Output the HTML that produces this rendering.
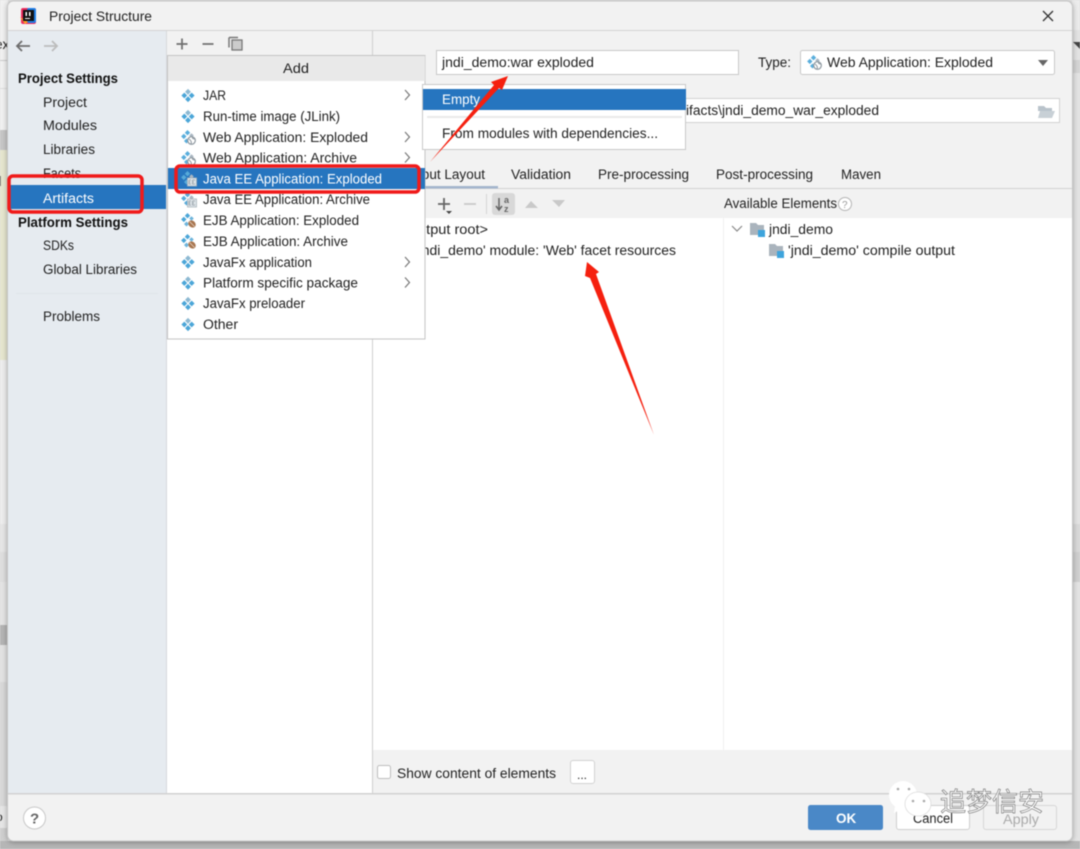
<!DOCTYPE html>
<html lang="en"><head><meta charset="utf-8"><title>Project Structure</title>
<style>
html,body{margin:0;padding:0;background:#ddd}
body{width:1080px;height:849px;overflow:hidden}
svg{display:block;filter:blur(.4px)}
text{font-family:"Liberation Sans","Noto Sans CJK SC",sans-serif;font-size:13.5px;fill:#222}
.b{font-weight:bold;fill:#111}
.w{fill:#fff}
</style></head><body>
<svg width="1080" height="849" viewBox="0 0 1080 849" xmlns="http://www.w3.org/2000/svg">
<defs>
<filter id="sh" x="-5%" y="-5%" width="110%" height="110%"><feDropShadow dx="0" dy="1" stdDeviation="3" flood-color="#000" flood-opacity=".35"/></filter>
<g id="d"><path d="M3.300 7l2.900-2.900L9.100 7 6.200 9.900z" fill="none"/><path d="M3.300 4.100L6.200 7 3.300 9.900.4 7zM10.700 4.100L13.600 7l-2.900 2.900L7.800 7zM7 7.800l2.900 2.900L7 13.600l-2.900-2.900z" fill="#4ba6d8"/><path d="M7 .4l2.900 2.900L7 6.200 4.100 3.300z" fill="#8db9d2"/></g>
<g id="web"><path d="M6.500 0l2.700 2.700-2.700 2.700-2.700-2.700zM2.800 3.700l2.700 2.700-2.700 2.700L.1 6.400z" fill="#5aaedc"/><path d="M10.500 3.200l2.300 2.300-2.300 2.300-2.300-2.300z" fill="#a9b7c2"/><path d="M5.500 8.500L8 11l-2.500 2.500L3 11z" fill="#5aaedc"/><circle cx="10.500" cy="10.500" r="3.800" fill="#fff" stroke="#8d979f" stroke-width="1.200"/><path d="M8 9c2 1.500 3 3 2 5M11.500 7c-.5 1.500 1 2 2.500 2" fill="none" stroke="#8d979f"/></g>
<g id="ee"><path d="M6.500 0l2.700 2.700-2.700 2.700-2.700-2.700zM2.800 3.700l2.700 2.700-2.700 2.700L.1 6.400zM5.500 8.500L8 11l-2.500 2.500L3 11z" fill="#57aad9"/><path d="M10.500 3.200l2.300 2.300-2.300 2.300-2.300-2.300z" fill="#a9b7c2"/><rect x="6.500" y="7" width="9" height="8" fill="#dfe6ea" stroke="#a9b4bb" stroke-width=".8"/><path d="M8 9v4h2M8 11h1.500M8 9h2M11.500 9v4H14M11.500 11H13M11.500 9H14" fill="none" stroke="#8d979f" stroke-width=".7"/></g>
<g id="ejb"><path d="M6.500 0l2.700 2.700-2.700 2.700-2.700-2.700zM2.800 3.700l2.700 2.700-2.700 2.700L.1 6.400z" fill="#4ba6d8"/><path d="M10.500 3.200l2.300 2.300-2.300 2.300-2.300-2.300zM5.500 8.500L8 11l-2.500 2.500L3 11z" fill="#6db5dc"/><ellipse cx="11" cy="11" rx="4" ry="3.300" transform="rotate(40 11 11)" fill="#a87650"/><path d="M8.500 8.500l5 5" stroke="#e6d4c2" stroke-width=".8"/></g>
<g id="fld"><path d="M0 0h6l2 2h6v10H0z" fill="#aab4bd"/></g>
</defs>

<!-- background behind dialog -->
<rect width="1080" height="849" fill="#e3e3e3"/>
<rect x="0" y="0" width="8" height="130" fill="#f1f1f1"/>
<rect x="0" y="60" width="8" height="1" fill="#ccc"/>
<rect x="0" y="88" width="8" height="1" fill="#ddd"/>
<rect x="0" y="130" width="8" height="20" fill="#c6c6c6"/>
<rect x="0" y="150" width="8" height="210" fill="#e6e6cf"/>
<rect x="0" y="360" width="8" height="164" fill="#eeeeee"/>
<rect x="0" y="524" width="8" height="28" fill="#e6e6e6"/>
<rect x="0" y="552" width="8" height="30" fill="#dedede"/>
<rect x="0" y="582" width="8" height="43" fill="#e4e4e4"/>
<rect x="0" y="625" width="8" height="20" fill="#b4b4b4"/>
<rect x="0" y="645" width="8" height="37" fill="#e2e2e2"/>
<rect x="0" y="682" width="8" height="124" fill="#d8d8d8"/>
<rect x="0" y="806" width="8" height="22" fill="#e6e6e6"/>
<rect x="0" y="828" width="8" height="21" fill="#cfcfcf"/>
<text x="-5" y="49">ex</text>
<text x="-6" y="186">d</text>
<text x="-4" y="821" style="font-size:12px">o</text>
<rect x="1072" y="0" width="8" height="30" fill="#ececec"/>
<rect x="1072" y="60" width="8" height="13" fill="#d4d4d4"/>
<path d="M1073 42h7v7z" fill="#444"/>
<rect x="1072" y="524" width="8" height="28" fill="#d8d8d8"/>
<rect x="1072" y="552" width="8" height="30" fill="#cfcfcf"/>
<rect x="0" y="841" width="1080" height="8" fill="#b6b6b6"/>

<!-- dialog -->
<rect x="7.500" y="1" width="1065" height="840" rx="6" fill="#f2f2f2" filter="url(#sh)"/>
<rect x="7.500" y="1" width="1065" height="840" rx="6" fill="#f2f2f2" stroke="#c6c6c6"/>
<rect x="8" y="30" width="1064" height="1" fill="#d3d3d3"/>

<!-- title -->
<rect x="21" y="8" width="15" height="16" rx="2" fill="#ee2a5e"/>
<rect x="27" y="8" width="9" height="15" rx="2" fill="#1e7fe8"/>
<path d="M20 17l5 7 3-2z" fill="#fca326"/>
<rect x="23" y="10" width="11" height="11" fill="#111"/>
<rect x="25" y="18" width="5" height="1" fill="#fff"/>
<rect x="25.500" y="12" width="1.500" height="4" fill="#fff"/><rect x="29" y="12" width="1.500" height="4" fill="#fff"/>
<text x="49" y="21" textLength="103" lengthAdjust="spacingAndGlyphs">Project Structure</text>
<path d="M1043 11l10 10M1053 11l-10 10" stroke="#333" stroke-width="1.300" fill="none"/>

<!-- sidebar -->
<rect x="8" y="31" width="158" height="762" fill="#e6ebf0"/>
<path d="M30 46H17M22 41l-5 5 5 5" stroke="#6e6e6e" stroke-width="1.800" fill="none"/>
<path d="M44 46h13M52 41l5 5-5 5" stroke="#bcbcbc" stroke-width="1.800" fill="none"/>
<text class="b" x="18" y="83" textLength="100" lengthAdjust="spacingAndGlyphs">Project Settings</text>
<text x="43" y="107" textLength="44" lengthAdjust="spacingAndGlyphs">Project</text>
<text x="43" y="130" textLength="54" lengthAdjust="spacingAndGlyphs">Modules</text>
<text x="43" y="154" textLength="52" lengthAdjust="spacingAndGlyphs">Libraries</text>
<text x="43" y="178" textLength="38" lengthAdjust="spacingAndGlyphs">Facets</text>
<rect x="8" y="185" width="159" height="24" fill="#2675bf"/>
<text class="w" x="43" y="203" textLength="51" lengthAdjust="spacingAndGlyphs">Artifacts</text>
<text class="b" x="18" y="227" textLength="110" lengthAdjust="spacingAndGlyphs">Platform Settings</text>
<text x="43" y="250" textLength="31" lengthAdjust="spacingAndGlyphs">SDKs</text>
<text x="43" y="274" textLength="94" lengthAdjust="spacingAndGlyphs">Global Libraries</text>
<rect x="16" y="293" width="142" height="1" fill="#e0e5ea"/>
<text x="43" y="321" textLength="57" lengthAdjust="spacingAndGlyphs">Problems</text>

<!-- middle column -->
<rect x="167" y="55" width="205" height="738" fill="#fff"/>
<rect x="166" y="31" width="1" height="762" fill="#d6d9dc"/>
<rect x="372" y="31" width="1" height="762" fill="#cfcfcf"/>
<path d="M176.500 44h11M182 38.500v11" stroke="#6e6e6e" stroke-width="1.700"/>
<path d="M202.500 44h11" stroke="#6e6e6e" stroke-width="1.700"/>
<path d="M229 37.500h9M229 37.500v10" stroke="#777" stroke-width="1.500" fill="none"/>
<rect x="232" y="40" width="10" height="10" fill="#ccc" stroke="#777" stroke-width="1.300"/>

<!-- right panel -->
<rect x="373" y="188" width="699" height="1" fill="#d2d2d2"/>
<rect x="373" y="218" width="699" height="532" fill="#fff"/>
<rect x="723" y="218" width="1" height="532" fill="#efefef"/>

<rect x="436.500" y="50.500" width="302" height="24" fill="#fff" stroke="#c9c9c9"/>
<text x="442" y="67" textLength="152" lengthAdjust="spacingAndGlyphs">jndi_demo:war exploded</text>
<text x="758" y="67" textLength="33" lengthAdjust="spacingAndGlyphs">Type:</text>
<rect x="800.500" y="50.500" width="254" height="24" rx="2" fill="#fff" stroke="#c9c9c9"/>
<use href="#web" x="807" y="55"/>
<text x="827" y="67" textLength="166" lengthAdjust="spacingAndGlyphs">Web Application: Exploded</text>
<path d="M1038 60h10l-5 6z" fill="#666"/>

<rect x="600.500" y="98.500" width="459" height="24" fill="#fff" stroke="#d2d2d2"/>
<text x="686" y="115" textLength="193" lengthAdjust="spacingAndGlyphs">ifacts\jndi_demo_war_exploded</text>
<path d="M1038 106h6l2 2h6v3h-14z" fill="#b9c3cb"/><path d="M1038 118l2-7h15l-3 7z" fill="#c8d0d6"/>

<text x="408" y="147">Include in project build</text>

<!-- tabs -->
<rect x="385" y="186" width="113" height="2.500" fill="#a3b5cd"/>
<text x="400" y="179" textLength="85" lengthAdjust="spacingAndGlyphs">Output Layout</text>
<text x="511" y="179" textLength="60" lengthAdjust="spacingAndGlyphs">Validation</text>
<text x="598" y="179" textLength="91" lengthAdjust="spacingAndGlyphs">Pre-processing</text>
<text x="716" y="179" textLength="97" lengthAdjust="spacingAndGlyphs">Post-processing</text>
<text x="841" y="179" textLength="40" lengthAdjust="spacingAndGlyphs">Maven</text>

<!-- toolbar -->
<path d="M438 204h12M444 198v12" stroke="#666" stroke-width="1.800"/>
<path d="M446 211h6l-3 3z" fill="#444"/>
<path d="M464 204h12" stroke="#c9c9c9" stroke-width="1.800"/>
<rect x="486" y="194" width="1" height="20" fill="#d5d5d5"/>
<rect x="492" y="193" width="23" height="22" rx="3" fill="#d8d8d8"/>
<path d="M499 198v12M496 206l3 4 3-4" stroke="#666" stroke-width="1.500" fill="none"/>
<text x="504" y="203" style="font-size:9px;fill:#666;font-weight:bold">a</text>
<text x="504" y="212" style="font-size:9px;fill:#666;font-weight:bold">z</text>
<path d="M525 208l6-7 7 7z" fill="#c9c9c9"/>
<path d="M552 200h13l-6 7z" fill="#c9c9c9"/>
<text x="724" y="208" textLength="113" lengthAdjust="spacingAndGlyphs">Available Elements</text>
<circle cx="845" cy="204" r="6.500" fill="#fff" stroke="#b5b5b5"/>
<text x="842" y="208" style="font-size:10px;fill:#999">?</text>

<!-- trees -->
<text x="410" y="234" textLength="78" lengthAdjust="spacingAndGlyphs">output root&gt;</text>
<text x="416" y="255" textLength="260" lengthAdjust="spacingAndGlyphs">'jndi_demo' module: 'Web' facet resources</text>
<path d="M732 226l5 5 5-5" stroke="#888" stroke-width="1.200" fill="none"/>
<use href="#fld" x="750" y="223"/><rect x="758" y="230" width="7" height="7" fill="#3ea4dc"/>
<text x="769" y="234" textLength="64" lengthAdjust="spacingAndGlyphs">jndi_demo</text>
<use href="#fld" x="769" y="244"/><rect x="777" y="251" width="7" height="7" fill="#3ea4dc"/>
<text x="788" y="255" textLength="167" lengthAdjust="spacingAndGlyphs">'jndi_demo' compile output</text>

<!-- bottom of panel -->
<rect x="377.500" y="765.500" width="13" height="13" rx="2" fill="#fff" stroke="#bdbdbd"/>
<text x="397" y="778" textLength="159" lengthAdjust="spacingAndGlyphs">Show content of elements</text>
<rect x="570.500" y="760.500" width="24" height="23" rx="2.500" fill="#fff" stroke="#d2d2d2"/>
<text x="577" y="779" style="font-size:12px">...</text>
<rect x="8" y="793" width="1064" height="1.500" fill="#d2d2d2"/>

<!-- footer -->
<circle cx="34.500" cy="818" r="11" fill="#fff" stroke="#c8c8c8"/>
<text x="30" y="823.500" style="font-size:15px;font-weight:bold;fill:#666">?</text>
<rect x="808" y="805" width="75" height="25" rx="2.500" fill="#4a88c7"/>
<text x="836" y="823" style="font-weight:bold;fill:#fff">OK</text>
<rect x="896.500" y="805.500" width="73" height="24" rx="2.500" fill="#fff" stroke="#cfcfcf"/>
<text x="913" y="823" textLength="40" lengthAdjust="spacingAndGlyphs">Cancel</text>
<rect x="983.500" y="805.500" width="73" height="24" rx="2.500" fill="#f2f2f2" stroke="#d6d6d6"/>
<text x="1003" y="824" textLength="36" lengthAdjust="spacingAndGlyphs" style="fill:#aaa">Apply</text>

<!-- Add popup -->
<rect x="167.500" y="55.500" width="257.500" height="283.500" fill="#fff" stroke="#c4c4c4"/>
<rect x="168" y="56" width="257" height="25" fill="#e9e9e9"/>
<text x="283" y="73" textLength="26" lengthAdjust="spacingAndGlyphs">Add</text>
<rect x="168" y="168" width="257" height="21" fill="#2675bf"/>

<use href="#d" x="181" y="88.500"/>
<use href="#d" x="181" y="109.500"/>
<use href="#web" x="181" y="130"/>
<use href="#web" x="181" y="151"/>
<use href="#ee" x="181" y="171"/>
<use href="#ee" x="181" y="192"/>
<use href="#ejb" x="181" y="213"/>
<use href="#ejb" x="181" y="234"/>
<use href="#d" x="181" y="255"/>
<use href="#d" x="181" y="276"/>
<use href="#d" x="181" y="296.500"/>
<use href="#d" x="181" y="317.500"/>

<text x="203" y="100" textLength="23" lengthAdjust="spacingAndGlyphs">JAR</text>
<text x="203" y="121" textLength="137" lengthAdjust="spacingAndGlyphs">Run-time image (JLink)</text>
<text x="203" y="142" textLength="165" lengthAdjust="spacingAndGlyphs">Web Application: Exploded</text>
<text x="203" y="162.500" textLength="154" lengthAdjust="spacingAndGlyphs">Web Application: Archive</text>
<text class="w" x="203" y="183.500" textLength="179" lengthAdjust="spacingAndGlyphs">Java EE Application: Exploded</text>
<text x="203" y="204" textLength="167" lengthAdjust="spacingAndGlyphs">Java EE Application: Archive</text>
<text x="203" y="225" textLength="156" lengthAdjust="spacingAndGlyphs">EJB Application: Exploded</text>
<text x="203" y="246" textLength="145" lengthAdjust="spacingAndGlyphs">EJB Application: Archive</text>
<text x="203" y="267" textLength="109" lengthAdjust="spacingAndGlyphs">JavaFx application</text>
<text x="203" y="287.500" textLength="155" lengthAdjust="spacingAndGlyphs">Platform specific package</text>
<text x="203" y="308" textLength="102" lengthAdjust="spacingAndGlyphs">JavaFx preloader</text>
<text x="203" y="329" textLength="35" lengthAdjust="spacingAndGlyphs">Other</text>

<g stroke="#777" stroke-width="1.200" fill="none">
<path d="M405 90l4.500 5-4.500 5"/><path d="M405 132l4.500 5-4.500 5"/><path d="M405 152.500l4.500 5-4.500 5"/><path d="M405 257l4.500 5-4.500 5"/><path d="M405 277.500l4.500 5-4.500 5"/>
</g>

<!-- sub popup -->
<rect x="422.500" y="84.500" width="263" height="65" fill="#fff" stroke="#c9c9c9"/>
<rect x="423" y="89" width="263" height="21" fill="#2675bf"/>
<rect x="427" y="116" width="255" height="2" fill="#eaeaea"/>
<text class="w" x="442" y="104" textLength="38" lengthAdjust="spacingAndGlyphs">Empty</text>
<text x="442" y="138" textLength="216" lengthAdjust="spacingAndGlyphs">From modules with dependencies...</text>

<!-- red annotations -->
<rect x="9" y="176" width="133" height="36" rx="4" fill="none" stroke="#f01a1a" stroke-width="3.500"/>
<rect x="176" y="166" width="243" height="26" rx="4" fill="none" stroke="#f01a1a" stroke-width="3.500"/>
<path d="M508 76L491 82 494 85 430 162 499 88 502 90z" fill="#f5200f"/>
<path d="M587 262L585 276 590 278 654 435 596 274 599 272z" fill="#f5200f"/>

<!-- watermark -->
<path d="M895 806l-1 7 8-4z" fill="#fff"/>
<ellipse cx="903" cy="795" rx="14" ry="14" fill="#fff"/>
<ellipse cx="918" cy="804" rx="13" ry="12" fill="#fff" stroke="#ddd" stroke-width=".8"/>
<circle cx="898" cy="789" r="1.300" fill="#aaa"/><circle cx="909" cy="789" r="1.300" fill="#aaa"/>
<circle cx="913" cy="801" r="1.300" fill="#aaa"/><circle cx="924" cy="801" r="1.300" fill="#aaa"/>
<text x="940" y="811" textLength="104" lengthAdjust="spacingAndGlyphs" style="font-size:26px;fill:#fff;stroke:#808080;stroke-width:.7">追梦信安</text>
</svg>
</body></html>
